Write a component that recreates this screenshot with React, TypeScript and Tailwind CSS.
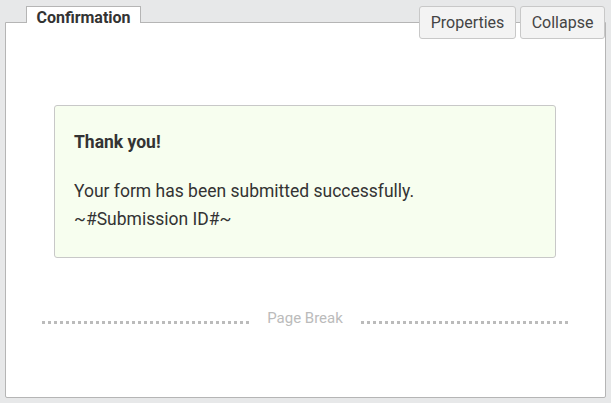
import React from "react";

export default function App() {
  return (
    <div
      className="relative w-[611px] h-[403px] bg-[#e7e8e9] pt-[6px] px-[5px] overflow-hidden"
      style={{ fontFamily: "Roboto, 'Liberation Sans', sans-serif" }}
    >
      <div className="flex">
        <div className="ml-[21px] h-[17px] w-[115px] bg-white border border-b-0 border-[#b5b5b5] -mb-px relative z-10 text-[16px] font-bold text-[#333] leading-[21px] text-center">
          Confirmation
        </div>
      </div>
      <div className="h-[376px] bg-white border border-[#b5b5b5] rounded-b-[2px] flex flex-col">
        <div className="ml-[48px] mt-[82px] w-[502px] h-[153px] bg-[#f7feef] border border-[#c8c8c8] rounded-[3px] pl-[19px] pt-[25px] text-[#333]">
          <div className="text-[17.5px] font-bold leading-[22px]">Thank you!</div>
          <div className="mt-[24px] text-[17.5px] leading-[28px]">
            Your form has been submitted successfully.
          </div>
          <div className="text-[17.5px] leading-[28px]">~#Submission ID#~</div>
        </div>
        <div className="ml-[36px] mt-[50px] w-[526px] flex items-center">
          <div className="flex-1 border-t-[3px] border-dotted border-[#bbb] mt-[8px]"></div>
          <div className="px-[18px] text-[15px] text-[#bbb] leading-[20px]">Page Break</div>
          <div className="flex-1 border-t-[3px] border-dotted border-[#bbb] mt-[8px]"></div>
        </div>
      </div>
      <div className="absolute top-[6px] left-[419px] flex gap-[4px]">
        <div className="h-[33px] w-[97px] bg-[#f3f3f3] border border-[#c8c8c8] rounded-[3px] text-[16px] text-[#444] flex items-center justify-center">
          Properties
        </div>
        <div className="h-[33px] w-[85px] bg-[#f3f3f3] border border-[#c8c8c8] rounded-[3px] text-[16px] text-[#444] flex items-center justify-center">
          Collapse
        </div>
      </div>
    </div>
  );
}
